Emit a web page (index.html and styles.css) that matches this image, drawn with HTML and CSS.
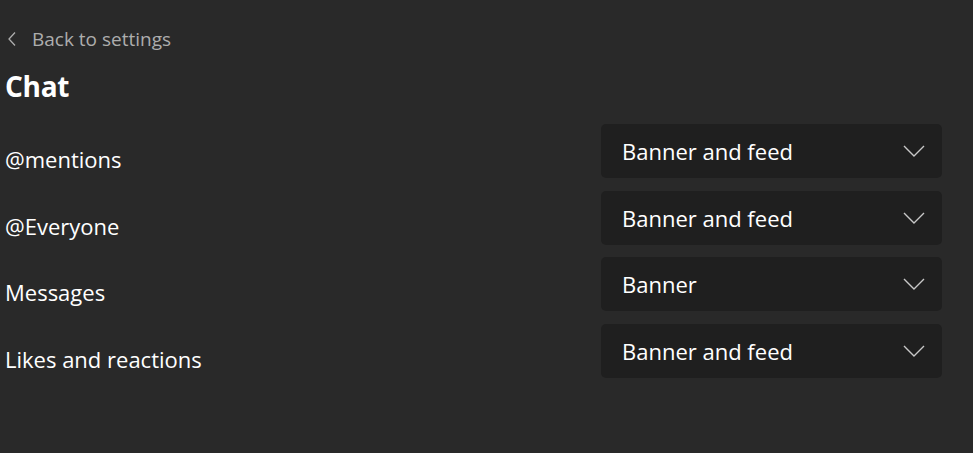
FILE: index.html
```html
<!DOCTYPE html>
<html>
<head>
<meta charset="utf-8">
<link rel="stylesheet" href="styles.css">
</head>
<body>
<div class="page">
  <a class="back" href="#">
    <svg class="back-icon" width="10" height="16" viewBox="0 0 10 16"><path d="M8 1.5 L2 8 L8 14.5" fill="none" stroke="#adadad" stroke-width="1.3"/></svg>
    <span>Back to settings</span>
  </a>
  <h1 class="title">Chat</h1>
  <div class="rows">
    <div class="row">
      <div class="label">@mentions</div>
      <div class="select"><span>Banner and feed</span><svg class="chev" width="22" height="12" viewBox="0 0 22 12"><path d="M1 1 L11 11 L21 1" fill="none" stroke="#c8c8c8" stroke-width="1.4"/></svg></div>
    </div>
    <div class="row">
      <div class="label">@Everyone</div>
      <div class="select"><span>Banner and feed</span><svg class="chev" width="22" height="12" viewBox="0 0 22 12"><path d="M1 1 L11 11 L21 1" fill="none" stroke="#c8c8c8" stroke-width="1.4"/></svg></div>
    </div>
    <div class="row">
      <div class="label">Messages</div>
      <div class="select"><span>Banner</span><svg class="chev" width="22" height="12" viewBox="0 0 22 12"><path d="M1 1 L11 11 L21 1" fill="none" stroke="#c8c8c8" stroke-width="1.4"/></svg></div>
    </div>
    <div class="row">
      <div class="label">Likes and reactions</div>
      <div class="select"><span>Banner and feed</span><svg class="chev" width="22" height="12" viewBox="0 0 22 12"><path d="M1 1 L11 11 L21 1" fill="none" stroke="#c8c8c8" stroke-width="1.4"/></svg></div>
    </div>
  </div>
</div>
</body>
</html>
```
FILE: styles.css
```css
html, body {
  margin: 0;
  height: 100%;
  background: #292929;
}
body {
  font-family: "Open Sans", "Noto Sans", sans-serif;
  color: #ffffff;
}
.page {
  padding: 26px 31px 0 5px;
}
.back {
  display: flex;
  align-items: center;
  gap: 15px;
  color: #adadad;
  text-decoration: none;
  font-size: 19px;
  height: 26px;
  padding-left: 2px;
}
.back-icon {
  display: block;
}
.title {
  margin: 16px 0 0 0;
  font-size: 28px;
  font-weight: 700;
  line-height: 36px;
  letter-spacing: -0.3px;
}
.rows {
  margin-top: 20px;
  display: flex;
  flex-direction: column;
  gap: 12.67px;
}
.row {
  display: flex;
  justify-content: space-between;
  align-items: flex-start;
}
.label {
  font-size: 22px;
  line-height: 30px;
  padding-top: 20px;
}
.select {
  width: 341px;
  height: 54px;
  box-sizing: border-box;
  background: #1f1f1f;
  border-radius: 5px;
  display: flex;
  align-items: center;
  justify-content: space-between;
  padding: 0 17px 0 21px;
  font-size: 22px;
}
.chev {
  display: block;
}
```
